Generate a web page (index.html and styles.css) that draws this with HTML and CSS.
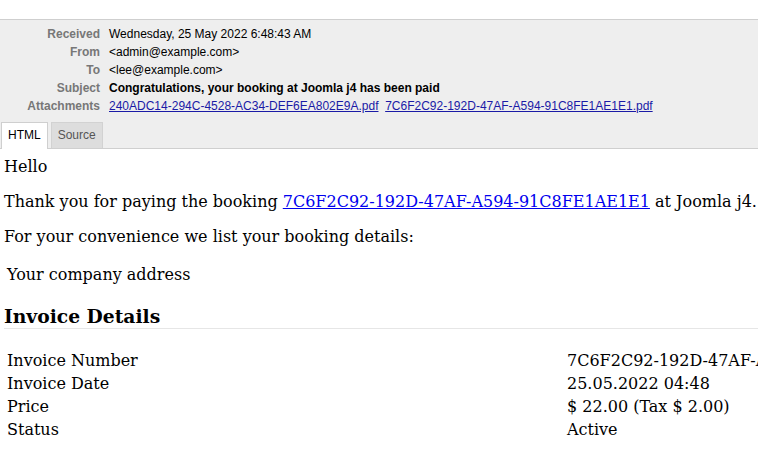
FILE: index.html
```html
<!DOCTYPE html>
<html>
<head>
<meta charset="utf-8">
<link rel="stylesheet" href="styles.css">
</head>
<body>
<div class="topbar"></div>
<div class="header">
  <div class="meta">
    <div class="label">Received</div><div class="value">Wednesday, 25 May 2022 6:48:43 AM</div>
    <div class="label">From</div><div class="value">&lt;admin@example.com&gt;</div>
    <div class="label">To</div><div class="value">&lt;lee@example.com&gt;</div>
    <div class="label">Subject</div><div class="value bold">Congratulations, your booking at Joomla j4 has been paid</div>
    <div class="label">Attachments</div><div class="value"><a href="#">240ADC14-294C-4528-AC34-DEF6EA802E9A.pdf</a>&nbsp; <a href="#">7C6F2C92-192D-47AF-A594-91C8FE1AE1E1.pdf</a></div>
  </div>
  <div class="tabs">
    <div class="tab active">HTML</div>
    <div class="tab">Source</div>
  </div>
</div>
<div class="content">
  <div class="line first">Hello</div>
  <div class="line">Thank you for paying the booking <a href="#">7C6F2C92-192D-47AF-A594-91C8FE1AE1E1</a> at Joomla j4.</div>
  <div class="line">For your convenience we list your booking details:</div>
  <div class="line address">Your company address</div>
  <h3 class="title">Invoice Details</h3>
  <div class="invoice">
    <div class="cell">Invoice Number</div><div class="cell">7C6F2C92-192D-47AF-A594-91C8FE1AE1E1</div>
    <div class="cell">Invoice Date</div><div class="cell">25.05.2022 04:48</div>
    <div class="cell">Price</div><div class="cell">$ 22.00 (Tax $ 2.00)</div>
    <div class="cell">Status</div><div class="cell">Active</div>
  </div>
</div>
</body>
</html>
```
FILE: styles.css
```css
html, body {
  margin: 0;
  padding: 0;
  background: #fff;
  overflow: hidden;
}
body {
  width: 758px;
  height: 456px;
}
.topbar {
  height: 19px;
  background: #fff;
}
.header {
  background: #eeeeee;
  border-top: 1px solid #cfcfcf;
  border-bottom: 1px solid #cfcfcf;
  font-family: "Liberation Sans", Arial, sans-serif;
  font-size: 12px;
}
.meta {
  display: grid;
  grid-template-columns: 100px 1fr;
  column-gap: 9px;
  padding-top: 5px;
  line-height: 18px;
}
.label {
  text-align: right;
  color: #777;
  font-weight: bold;
}
.value {
  color: #000;
  white-space: nowrap;
}
.bold {
  font-weight: bold;
}
.value a {
  color: #1a1aa6;
  text-decoration: underline;
}
.tabs {
  display: flex;
  gap: 3px;
  margin-top: 7px;
  padding-left: 1px;
  margin-bottom: -1px;
}
.tab {
  line-height: 24px;
  padding: 0 6px;
  background: #dddddd;
  color: #555;
  border: 1px solid #d2d2d2;
  border-bottom: none;
  box-sizing: border-box;
  height: 26px;
}
.tab.active {
  background: #fff;
  color: #000;
  border-color: #cfcfcf;
  height: 27px;
}
.content {
  font-family: "DejaVu Serif", serif;
  font-size: 16px;
  color: #000;
  padding: 0 4px;
}
.line {
  line-height: 19px;
  margin-top: 16px;
  white-space: nowrap;
}
.line.first {
  margin-top: 8px;
}
.line.address {
  margin-top: 19px;
  padding-left: 3px;
}
.content a {
  color: #0000ee;
  text-decoration: underline;
}
.title {
  font-size: 18.72px;
  font-weight: bold;
  margin: 21px -4px 0 0;
  padding-bottom: 1px;
  line-height: 22px;
  border-bottom: 1px solid #e6e6e6;
}
.invoice {
  display: grid;
  grid-template-columns: 560px 1fr;
  margin-top: 20px;
  padding-left: 3px;
  grid-auto-rows: 23px;
  line-height: 23px;
  white-space: nowrap;
}
```
